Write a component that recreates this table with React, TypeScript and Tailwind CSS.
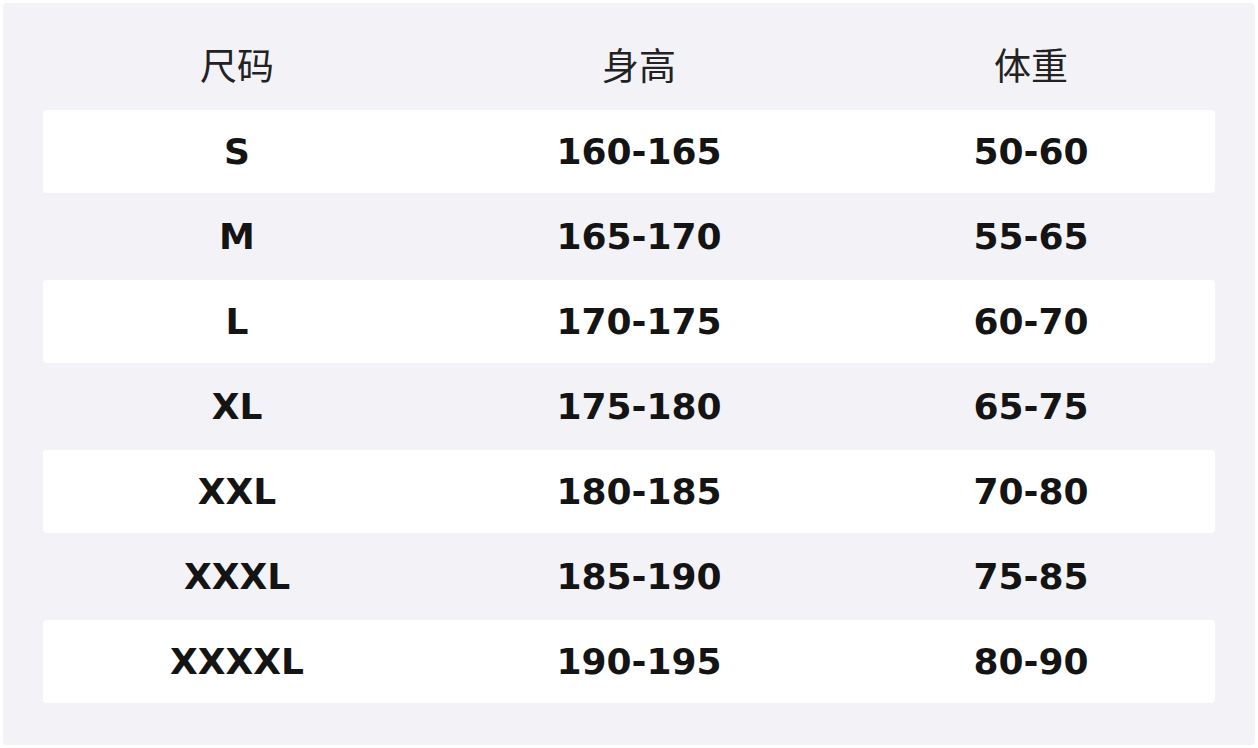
const rows = [
  { size: 'S', height: '160-165', weight: '50-60' },
  { size: 'M', height: '165-170', weight: '55-65' },
  { size: 'L', height: '170-175', weight: '60-70' },
  { size: 'XL', height: '175-180', weight: '65-75' },
  { size: 'XXL', height: '180-185', weight: '70-80' },
  { size: 'XXXL', height: '185-190', weight: '75-85' },
  { size: 'XXXXL', height: '190-195', weight: '80-90' },
];

export default function App() {
  return (
    <div className="w-[1258px] h-[748px] bg-white p-[3px]">
      <div className="h-full bg-[#f2f2f7] rounded-sm px-10 pb-10">
        {/* Header */}
        <div className="grid grid-cols-[388px_416px_368px] h-[107px] items-center text-[37px] text-[#222] font-['Noto_Sans_CJK_SC',sans-serif] pt-[17px]">
          <div className="text-center">尺码</div>
          <div className="text-center">身高</div>
          <div className="text-center">体重</div>
        </div>

        {/* Rows */}
        {rows.map((row, index) => (
          <div
            key={row.size}
            className={`grid grid-cols-[388px_416px_368px] items-center h-[83px] mb-[2px] rounded-sm font-['DejaVu_Sans',sans-serif] font-bold text-[36px] text-[#141414] ${
              index % 2 === 0 ? 'bg-white' : 'bg-transparent'
            }`}
          >
            <div className="text-center">{row.size}</div>
            <div className="text-center">{row.height}</div>
            <div className="text-center">{row.weight}</div>
          </div>
        ))}
      </div>
    </div>
  );
}
